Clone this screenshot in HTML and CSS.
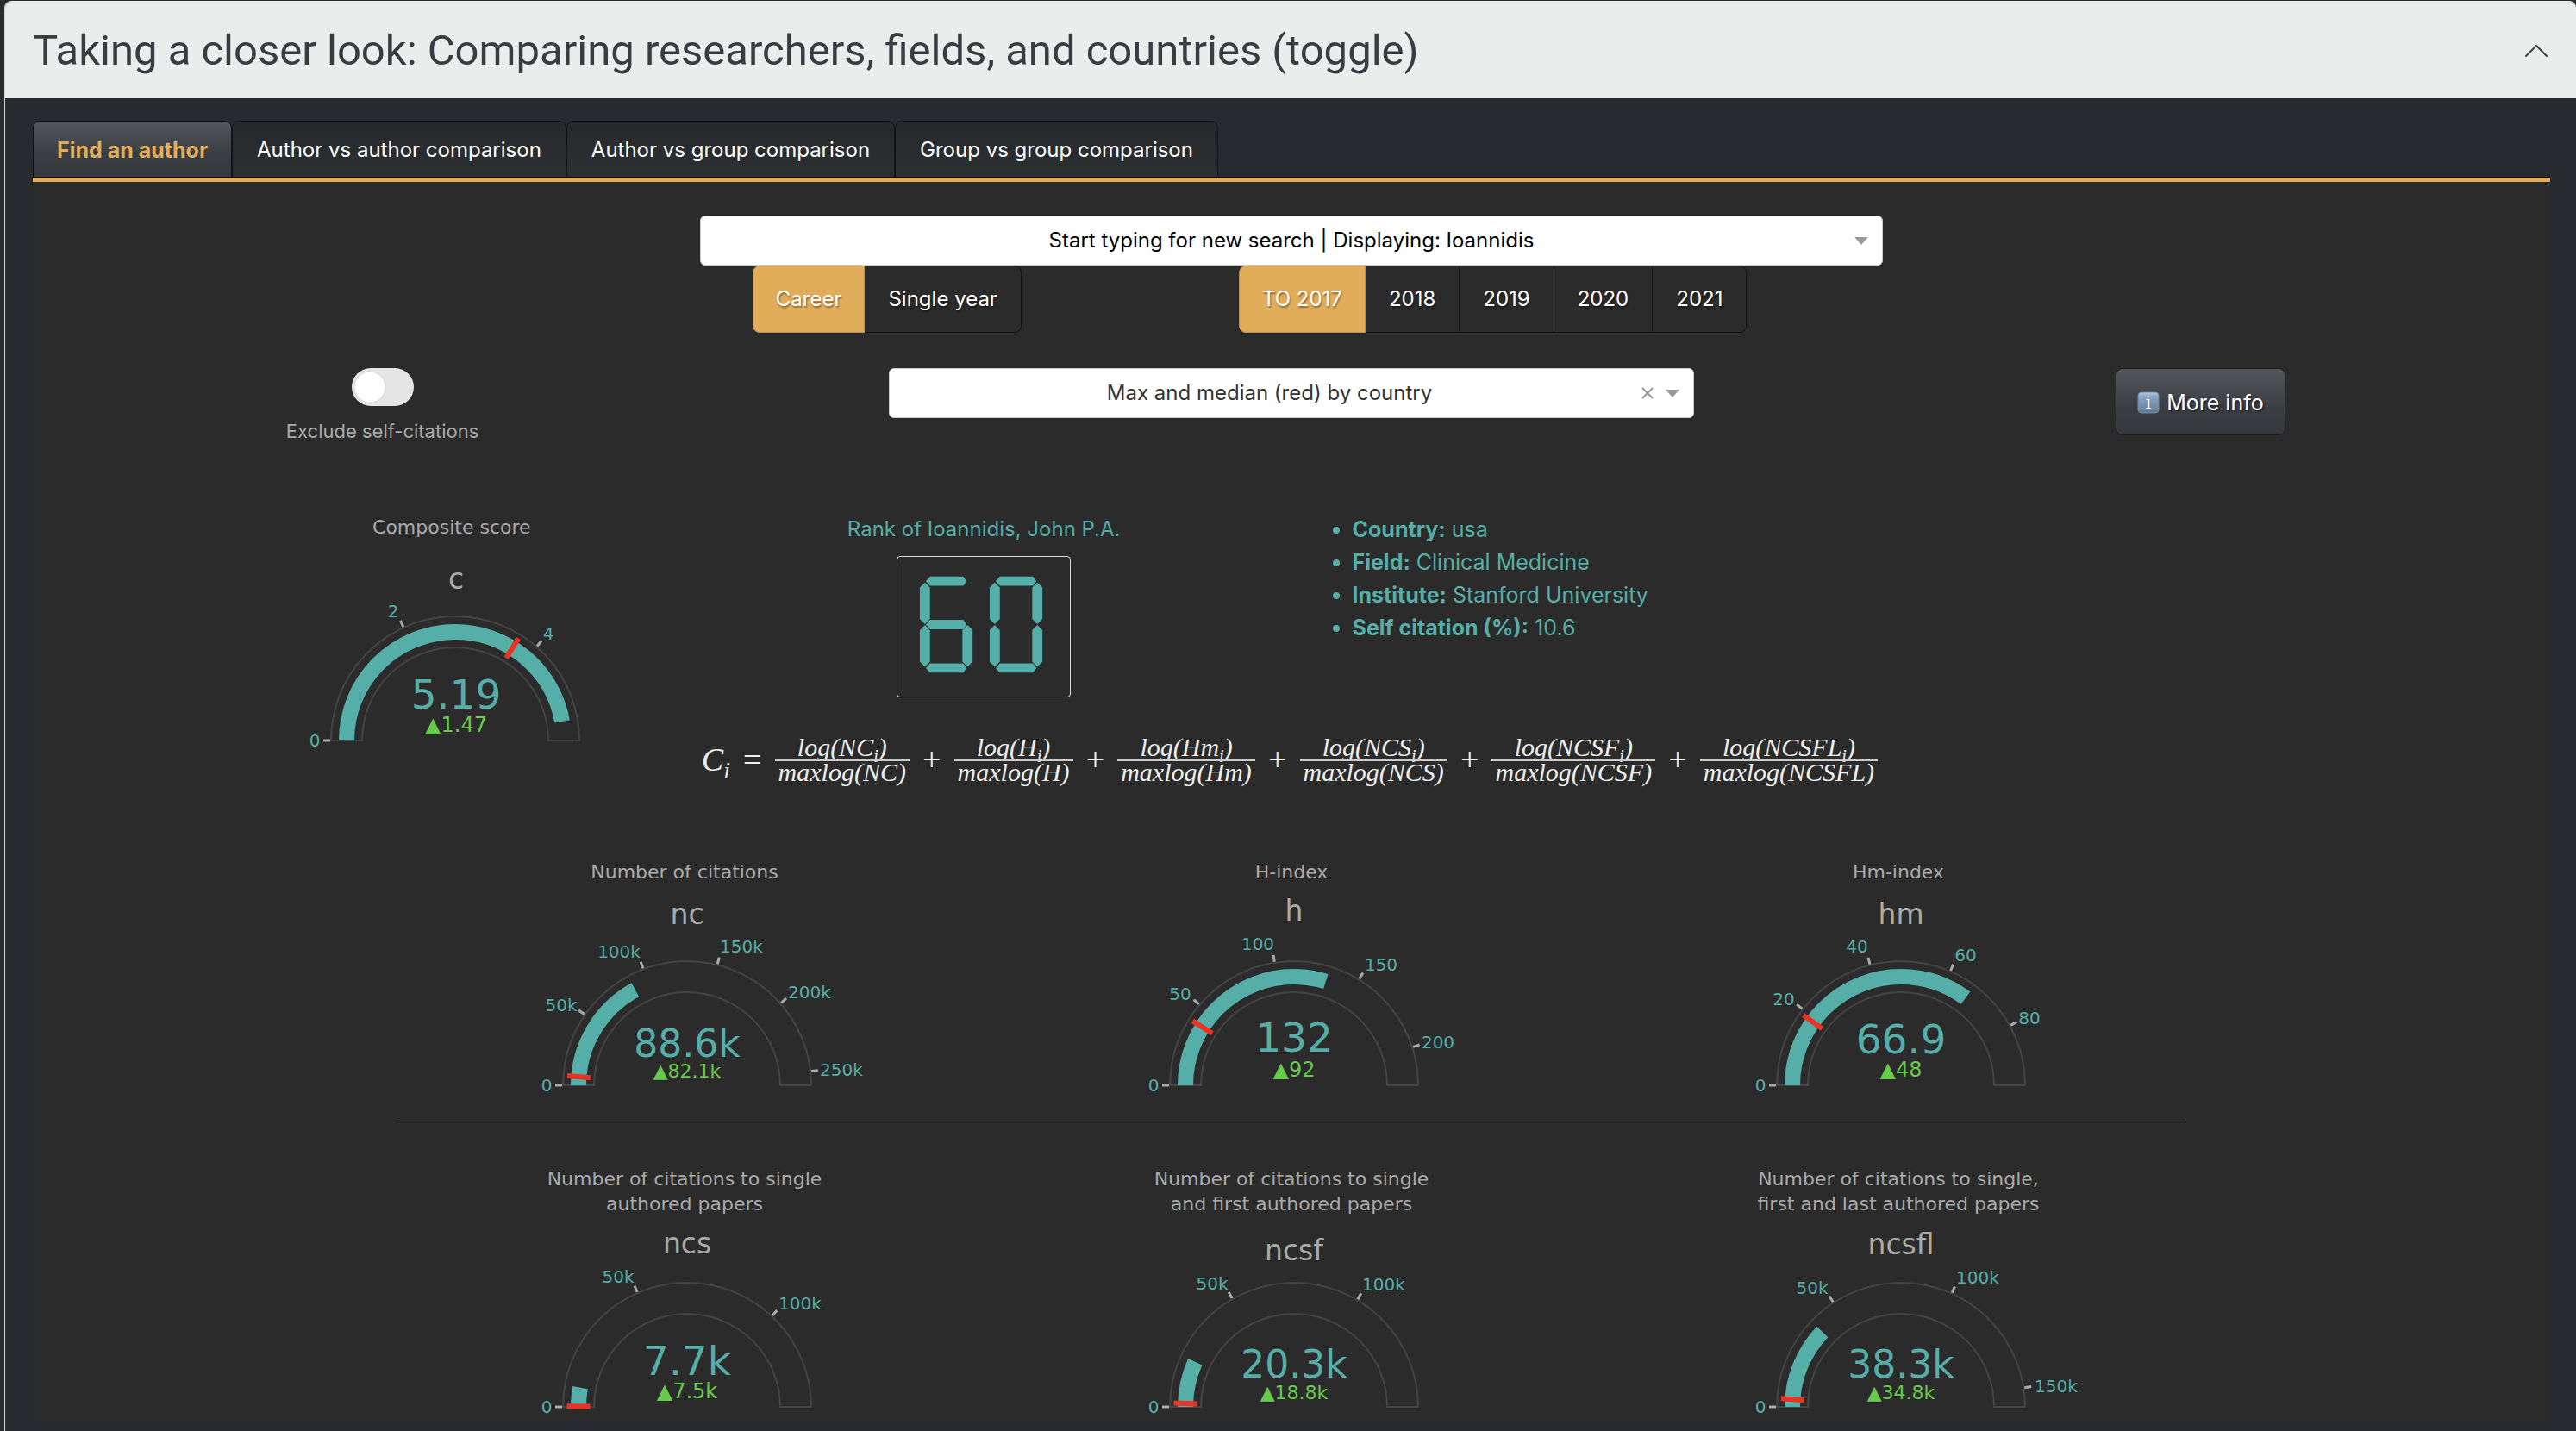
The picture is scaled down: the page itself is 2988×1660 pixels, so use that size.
FILE: index.html
```html
<!DOCTYPE html>
<html lang="en">
<head>
<meta charset="utf-8">
<title>Comparing researchers, fields, and countries</title>
<link rel="stylesheet" href="styles.css">
</head>
<body>
<main class="accordion">
  <h2 class="accordion-header">
    <button class="accordion-toggle" type="button" aria-expanded="true">
      <span>Taking a closer look: Comparing researchers, fields, and countries (toggle)</span>
      <svg class="chevron" viewBox="0 0 28 16" aria-hidden="true"><path d="M2 14 14 2 26 14"/></svg>
    </button>
  </h2>
  <div class="accordion-body">
    <div class="tabs" role="tablist">
      <button class="tab tab-active" type="button" role="tab" aria-selected="true">Find an author</button>
      <button class="tab" type="button" role="tab">Author vs author comparison</button>
      <button class="tab" type="button" role="tab">Author vs group comparison</button>
      <button class="tab" type="button" role="tab">Group vs group comparison</button>
    </div>
    <div class="panel" role="tabpanel">
      <div class="search">
        <div class="dropdown">
          <select class="dropdown-select" aria-label="Author"><option>Start typing for new search | Displaying: Ioannidis</option></select>
          <span class="dropdown-icons"><span class="caret"></span></span>
        </div>
        <div class="choices">
          <div class="button-group" role="radiogroup" aria-label="Period">
            <input type="radio" name="period" id="career" checked><label for="career">Career</label>
            <input type="radio" name="period" id="single"><label for="single">Single year</label>
          </div>
          <div class="button-group" role="radiogroup" aria-label="Year">
            <input type="radio" name="year" id="y2017" checked><label for="y2017">TO 2017</label>
            <input type="radio" name="year" id="y2018"><label for="y2018">2018</label>
            <input type="radio" name="year" id="y2019"><label for="y2019">2019</label>
            <input type="radio" name="year" id="y2020"><label for="y2020">2020</label>
            <input type="radio" name="year" id="y2021"><label for="y2021">2021</label>
          </div>
        </div>
      </div>

      <div class="options">
        <div class="switch">
          <input class="switch-input" type="checkbox" id="self-citations">
          <label class="switch-label" for="self-citations">Exclude self-citations</label>
        </div>
        <div class="dropdown dropdown-clearable">
          <select class="dropdown-select" aria-label="Reference values"><option>Max and median (red) by country</option></select>
          <span class="dropdown-icons"><button class="clear" type="button" aria-label="Clear"><svg viewBox="0 0 16 16"><path d="M2 2 14 14M14 2 2 14"/></svg></button><span class="caret"></span></span>
        </div>
        <button class="more-info" type="button">
          <svg class="info-icon" viewBox="0 0 26 26" aria-hidden="true">
            <defs><linearGradient id="info-fill" x1="0" y1="0" x2="0" y2="1"><stop offset="0" stop-color="#b5c9df"/><stop offset=".2" stop-color="#8aa6c9"/><stop offset="1" stop-color="#64798f"/></linearGradient></defs>
            <rect x="1" y="1" width="24" height="24" rx="4" fill="url(#info-fill)" stroke="#6d89a8"/>
            <text x="13" y="20" text-anchor="middle">i</text>
          </svg>
          More info
        </button>
      </div>

      <section class="summary">
        <figure class="gauge gauge-composite">
          <figcaption>Composite score</figcaption>
          <svg class="dial" viewBox="-234 -215 460 230">
            <path class="ring" d="M-144 0A144 144 0 0 1 144 0H108A108 108 0 0 0 -108 0Z"/>
            <path class="bar" pathLength="180" stroke-dasharray="169.9 400" d="M-126 0A126 126 0 0 1 126 0"/>
            <path class="mark" transform="rotate(121.7)" d="M-139.5 0h27"/>
            <g class="ticks"><path d="M-153 0h8"/><path transform="rotate(65.5)" d="M-153 0h8"/><path transform="rotate(130.9)" d="M-153 0h8"/></g>
            <g class="labels"><text x="-163" y="7">0</text><text x="-72" y="-143">2</text><text x="108" y="-117">4</text></g>
            <text class="name" x="1" y="-176">c</text>
            <text class="value" x="1" y="-37">5.19</text>
            <text class="delta delta-short" x="1" y="-10">▲1.47</text>
          </svg>
        </figure>
        <div class="profile">
          <div class="rank">
            <div>Rank of Ioannidis, John P.A.</div>
            <svg class="led" viewBox="0 0 202 164" role="img" aria-label="60">
              <defs>
                <path id="seg-h" d="M7 5.500 12 0H51L55 5.500 51 11H12Z"/>
                <path id="seg-v" d="M6 0 12 6V43L6 49 0 43V6Z"/>
              </defs>
              <g transform="translate(26 23)">
                <use href="#seg-h"/><use href="#seg-h" y="51"/><use href="#seg-h" y="102"/>
                <use href="#seg-v" y="7"/><use href="#seg-v" y="57"/><use href="#seg-v" x="50" y="57"/>
              </g>
              <g transform="translate(108 23)">
                <use href="#seg-h"/><use href="#seg-h" y="102"/>
                <use href="#seg-v" y="7"/><use href="#seg-v" y="57"/><use href="#seg-v" x="50" y="7"/><use href="#seg-v" x="50" y="57"/>
              </g>
            </svg>
          </div>
          <ul class="facts">
            <li><b>Country:</b> usa</li>
            <li><b>Field:</b> Clinical Medicine</li>
            <li><b>Institute:</b> Stanford University</li>
            <li><b>Self citation (%):</b> 10.6</li>
          </ul>
          <div class="formula">
            <span class="lead">C<sub>i</sub></span><span class="op">=</span>
            <span class="frac"><span>log(NC<sub>i</sub>)</span><span>maxlog(NC)</span></span><span class="op">+</span>
            <span class="frac"><span>log(H<sub>i</sub>)</span><span>maxlog(H)</span></span><span class="op">+</span>
            <span class="frac"><span>log(Hm<sub>i</sub>)</span><span>maxlog(Hm)</span></span><span class="op">+</span>
            <span class="frac"><span>log(NCS<sub>i</sub>)</span><span>maxlog(NCS)</span></span><span class="op">+</span>
            <span class="frac"><span>log(NCSF<sub>i</sub>)</span><span>maxlog(NCSF)</span></span><span class="op">+</span>
            <span class="frac"><span>log(NCSFL<sub>i</sub>)</span><span>maxlog(NCSFL)</span></span>
          </div>
        </div>
      </section>

      <section class="gauges">
        <figure class="gauge">
          <figcaption>Number of citations</figcaption>
          <svg class="dial" viewBox="-233 -215 460 230">
            <path class="ring" d="M-144 0A144 144 0 0 1 144 0H108A108 108 0 0 0 -108 0Z"/>
            <path class="bar" pathLength="180" stroke-dasharray="61.5 400" d="M-126 0A126 126 0 0 1 126 0"/>
            <path class="mark" transform="rotate(4.5)" d="M-139.5 0h27"/>
            <g class="ticks"><path d="M-153 0h8"/><path transform="rotate(34.7)" d="M-153 0h8"/><path transform="rotate(69.4)" d="M-153 0h8"/><path transform="rotate(104.1)" d="M-153 0h8"/><path transform="rotate(138.8)" d="M-153 0h8"/><path transform="rotate(173.5)" d="M-153 0h8"/></g>
            <g class="labels"><text x="-163" y="7">0</text><text x="-146" y="-86">50k</text><text x="-79" y="-148">100k</text><text x="63" y="-154">150k</text><text x="142" y="-101">200k</text><text x="179" y="-11">250k</text></g>
            <text class="name" y="-187">nc</text>
            <text class="value value-long" y="-33">88.6k</text>
            <text class="delta" y="-9">▲82.1k</text>
          </svg>
        </figure>
        <figure class="gauge">
          <figcaption>H-index</figcaption>
          <svg class="dial" viewBox="-233 -215 460 230">
            <path class="ring" d="M-144 0A144 144 0 0 1 144 0H108A108 108 0 0 0 -108 0Z"/>
            <path class="bar" pathLength="180" stroke-dasharray="107 400" d="M-126 0A126 126 0 0 1 126 0"/>
            <path class="mark" transform="rotate(32.4)" d="M-139.5 0h27"/>
            <g class="ticks"><path d="M-153 0h8"/><path transform="rotate(40.5)" d="M-153 0h8"/><path transform="rotate(81)" d="M-153 0h8"/><path transform="rotate(121.5)" d="M-153 0h8"/><path transform="rotate(162.1)" d="M-153 0h8"/></g>
            <g class="labels"><text x="-163" y="7">0</text><text x="-132" y="-99">50</text><text x="-42" y="-157">100</text><text x="101" y="-133">150</text><text x="167" y="-43">200</text></g>
            <text class="name" y="-191">h</text>
            <text class="value" y="-39">132</text>
            <text class="delta delta-short" y="-10">▲92</text>
          </svg>
        </figure>
        <figure class="gauge">
          <figcaption>Hm-index</figcaption>
          <svg class="dial" viewBox="-233 -215 460 230">
            <path class="ring" d="M-144 0A144 144 0 0 1 144 0H108A108 108 0 0 0 -108 0Z"/>
            <path class="bar" pathLength="180" stroke-dasharray="126.5 400" d="M-126 0A126 126 0 0 1 126 0"/>
            <path class="mark" transform="rotate(35.7)" d="M-139.5 0h27"/>
            <g class="ticks"><path d="M-153 0h8"/><path transform="rotate(37.8)" d="M-153 0h8"/><path transform="rotate(75.6)" d="M-153 0h8"/><path transform="rotate(113.4)" d="M-153 0h8"/><path transform="rotate(151.3)" d="M-153 0h8"/></g>
            <g class="labels"><text x="-163" y="7">0</text><text x="-136" y="-93">20</text><text x="-51" y="-154">40</text><text x="75" y="-144">60</text><text x="149" y="-71">80</text></g>
            <text class="name" y="-187">hm</text>
            <text class="value" y="-37">66.9</text>
            <text class="delta delta-short" y="-10">▲48</text>
          </svg>
        </figure>
      </section>

      <hr class="divider">

      <section class="gauges gauges-wrapped">
        <figure class="gauge">
          <figcaption>Number of citations to single<br>authored papers</figcaption>
          <svg class="dial" viewBox="-233 -215 460 230">
            <path class="ring" d="M-144 0A144 144 0 0 1 144 0H108A108 108 0 0 0 -108 0Z"/>
            <path class="bar" pathLength="180" stroke-dasharray="10.2 400" d="M-126 0A126 126 0 0 1 126 0"/>
            <path class="mark" transform="rotate(0.3)" d="M-139.5 0h27"/>
            <g class="ticks"><path d="M-153 0h8"/><path transform="rotate(66.5)" d="M-153 0h8"/><path transform="rotate(133)" d="M-153 0h8"/></g>
            <g class="labels"><text x="-163" y="7">0</text><text x="-80" y="-144">50k</text><text x="131" y="-113">100k</text></g>
            <text class="name" y="-178">ncs</text>
            <text class="value" y="-37">7.7k</text>
            <text class="delta delta-short" y="-10">▲7.5k</text>
          </svg>
        </figure>
        <figure class="gauge">
          <figcaption>Number of citations to single<br>and first authored papers</figcaption>
          <svg class="dial" viewBox="-233 -215 460 230">
            <path class="ring" d="M-144 0A144 144 0 0 1 144 0H108A108 108 0 0 0 -108 0Z"/>
            <path class="bar" pathLength="180" stroke-dasharray="24.5 400" d="M-126 0A126 126 0 0 1 126 0"/>
            <path class="mark" transform="rotate(1.8)" d="M-139.5 0h27"/>
            <g class="ticks"><path d="M-153 0h8"/><path transform="rotate(60.3)" d="M-153 0h8"/><path transform="rotate(120.6)" d="M-153 0h8"/></g>
            <g class="labels"><text x="-163" y="7">0</text><text x="-95" y="-136">50k</text><text x="104" y="-135">100k</text></g>
            <text class="name" y="-170">ncsf</text>
            <text class="value value-long" y="-34">20.3k</text>
            <text class="delta" y="-9">▲18.8k</text>
          </svg>
        </figure>
        <figure class="gauge">
          <figcaption>Number of citations to single,<br>first and last authored papers</figcaption>
          <svg class="dial" viewBox="-233 -215 460 230">
            <path class="ring" d="M-144 0A144 144 0 0 1 144 0H108A108 108 0 0 0 -108 0Z"/>
            <path class="bar" pathLength="180" stroke-dasharray="43.7 400" d="M-126 0A126 126 0 0 1 126 0"/>
            <path class="mark" transform="rotate(4)" d="M-139.5 0h27"/>
            <g class="ticks"><path d="M-153 0h8"/><path transform="rotate(57.1)" d="M-153 0h8"/><path transform="rotate(114.1)" d="M-153 0h8"/><path transform="rotate(171.2)" d="M-153 0h8"/></g>
            <g class="labels"><text x="-163" y="7">0</text><text x="-103" y="-131">50k</text><text x="89" y="-143">100k</text><text x="180" y="-17">150k</text></g>
            <text class="name" y="-177">ncsfl</text>
            <text class="value value-long" y="-34">38.3k</text>
            <text class="delta" y="-9">▲34.8k</text>
          </svg>
        </figure>
      </section>
    </div>
  </div>
</main>
</body>
</html>
```

FILE: styles.css
```css
* { box-sizing: border-box; }

body {
  margin: 0;
  padding: 1px 0 0 5px;
  background: #2b2b2b;
  color: #aaa;
  font: 24px/38px Inter, "Liberation Sans", sans-serif;
}

button, select { font: inherit; margin: 0; }

.accordion {
  border-left: 1px solid #d4d6d6;
  border-radius: 8px 8px 0 0;
  background: #272b30;
}

.accordion-header { margin: 0; }

.accordion-toggle {
  display: flex;
  align-items: center;
  justify-content: space-between;
  width: 100%;
  height: 113px;
  padding: 2px 32px 0;
  border: 0;
  border-radius: 8px 8px 0 0;
  background: #ebedec;
  color: #3a3c42;
  font-family: Roboto, "Liberation Sans", sans-serif;
  font-size: 49px;
  font-weight: 400;
  line-height: 58px;
  text-align: left;
}

.chevron { width: 28px; height: 16px; }
.chevron path { fill: none; stroke: #3a3f44; stroke-width: 2; stroke-linecap: round; }

.accordion-body { padding: 26px 30px 13px 32px; }

.tabs { display: flex; border-bottom: 1px solid #111417; }

.tab {
  height: 66px;
  margin-bottom: -1px;
  padding: 1px 28px 0;
  border: 1px solid #111417;
  border-radius: 8px 8px 0 0;
  background: linear-gradient(#26282b, #2d3033);
  color: #fff;
}

.tab-active {
  padding: 1px 27px 0;
  background: linear-gradient(#53565b, #3a3d42 60%, #35393d);
  color: #e1ad5b;
  font-size: 25px;
  font-weight: 700;
}

.panel {
  padding-top: 39px;
  border-top: 5px solid #e1ad5b;
  background: #2b2b2b;
}

.search { width: 47%; margin: 0 auto; }

.dropdown { position: relative; }

.dropdown-select {
  display: block;
  appearance: none;
  width: 100%;
  height: 58px;
  padding: 0 20px;
  border: 1px solid #ccc;
  border-radius: 6px;
  background: #fff;
  color: #000;
  text-align-last: center;
}

.dropdown-icons {
  position: absolute;
  top: 0;
  right: 17px;
  bottom: 0;
  display: flex;
  align-items: center;
  gap: 13px;
}

.caret {
  border: 8px solid transparent;
  border-top: 9px solid #999;
  border-bottom: 0;
}

.clear { display: flex; padding: 0; border: 0; background: none; }
.clear svg { width: 16px; height: 16px; }
.clear path { fill: none; stroke: #999; stroke-width: 2; }

.choices { display: flex; gap: 252px; padding-left: 61px; }

.button-group { display: flex; }

.button-group input { position: absolute; opacity: 0; }

.button-group label {
  height: 78px;
  padding: 0 27px;
  border: 1px solid #161616;
  border-left-width: 0;
  color: #fff;
  line-height: 76px;
  text-shadow: 1px 2px 2px rgba(0, 0, 0, .4);
}

.button-group label:first-of-type { border-left-width: 1px; border-radius: 8px 0 0 8px; }
.button-group label:last-of-type { border-radius: 0 8px 8px 0; }
.button-group input:checked + label { padding: 0 26px; border-color: #b98f4d; background: #e1ad5b; }

.options {
  display: grid;
  grid-template-columns: 5fr 8fr 5fr;
  align-items: start;
  justify-items: center;
  margin-top: 41px;
}

.switch {
  display: flex;
  flex-direction: column;
  align-items: center;
  gap: 14px;
}

.switch-input {
  appearance: none;
  width: 72px;
  height: 44px;
  margin: 0;
  border-radius: 22px;
  background: radial-gradient(circle at 21px 22px, #fff 17px, #d5d5d5 18px, #e5e5e5 19px);
}

.switch-label { font-size: 22px; line-height: 30px; }

.dropdown-clearable { width: 72%; }
.dropdown-clearable .dropdown-select { padding-right: 71px; color: #333; }

.more-info {
  display: flex;
  align-items: center;
  gap: 8px;
  height: 78px;
  padding: 2px 24px 0;
  border: 1px solid #1c1d1f;
  border-radius: 8px;
  background: linear-gradient(#53565b, #3a3d42 60%, #35393d);
  color: #fff;
  font-size: 25px;
  text-shadow: 2px 2px 2px rgba(0, 0, 0, .4);
}

.info-icon { width: 26px; height: 26px; }
.info-icon text { fill: #fff; font: 20px "DejaVu Serif", serif; text-shadow: none; }

.summary {
  display: grid;
  grid-template-columns: 1fr 47% 1fr;
  align-items: start;
  margin-top: 80px;
}

.gauge {
  display: flex;
  flex-direction: column;
  align-items: center;
  gap: 18px;
  margin: 0;
  font: 22px/29px "DejaVu Sans", Verdana, sans-serif;
  text-align: center;
}

.gauge-composite { justify-self: end; margin: 2px 58px 0 0; }

.dial { width: 460px; height: 230px; overflow: visible; }
.dial text { text-anchor: middle; }
.ring { fill: none; stroke: #444; stroke-width: 2; }
.bar { fill: none; stroke: #56aea8; stroke-width: 18; }
.mark { stroke: #ea3323; stroke-width: 6; }
.ticks { stroke: #aaa; stroke-width: 3; }
.labels { fill: #56aea8; font-size: 20px; }
.name { fill: #aaa; font-size: 33px; }
.value { fill: #56aea8; font-size: 47px; }
.value-long { font-size: 44px; }
.delta { fill: #67ca4b; font-size: 22px; }
.delta-short { font-size: 24px; }

.profile {
  display: grid;
  grid-template-columns: 48% 1fr;
  color: #56aea8;
}

.rank {
  display: flex;
  flex-direction: column;
  align-items: center;
  gap: 12px;
}

.led {
  width: 202px;
  height: 164px;
  border: 1px solid #ddd;
  border-radius: 4px;
  fill: #56aea8;
}

.facts { margin: 0; padding-left: 98px; font-size: 25px; }

.formula {
  grid-column: 1 / -1;
  display: flex;
  align-items: center;
  justify-content: space-between;
  margin-top: 44px;
  padding: 0 6px 0 2px;
  color: #eee;
  font: italic 30px/28px "Liberation Serif", "Times New Roman", serif;
}

.formula sub { font-size: 20px; line-height: 0; }
.lead { font-size: 38px; }
.lead sub { font-size: 28px; }
.op { font-size: 38px; font-style: normal; }

.frac { display: grid; justify-items: center; }
.frac > :last-child {
  width: 100%;
  padding: 0 4px;
  border-top: 2px solid #ccc;
  line-height: 26px;
  text-align: center;
}

.gauges {
  display: grid;
  grid-template-columns: repeat(3, 1fr);
  max-width: 2112px;
  margin: 88px auto 0;
}

.divider {
  width: 71%;
  height: 1px;
  margin: 27px auto 51px;
  border: 0;
  background: #4a4a4a;
}

.gauges-wrapped { margin-top: 0; }
.gauges-wrapped .gauge { gap: 6px; }
```
